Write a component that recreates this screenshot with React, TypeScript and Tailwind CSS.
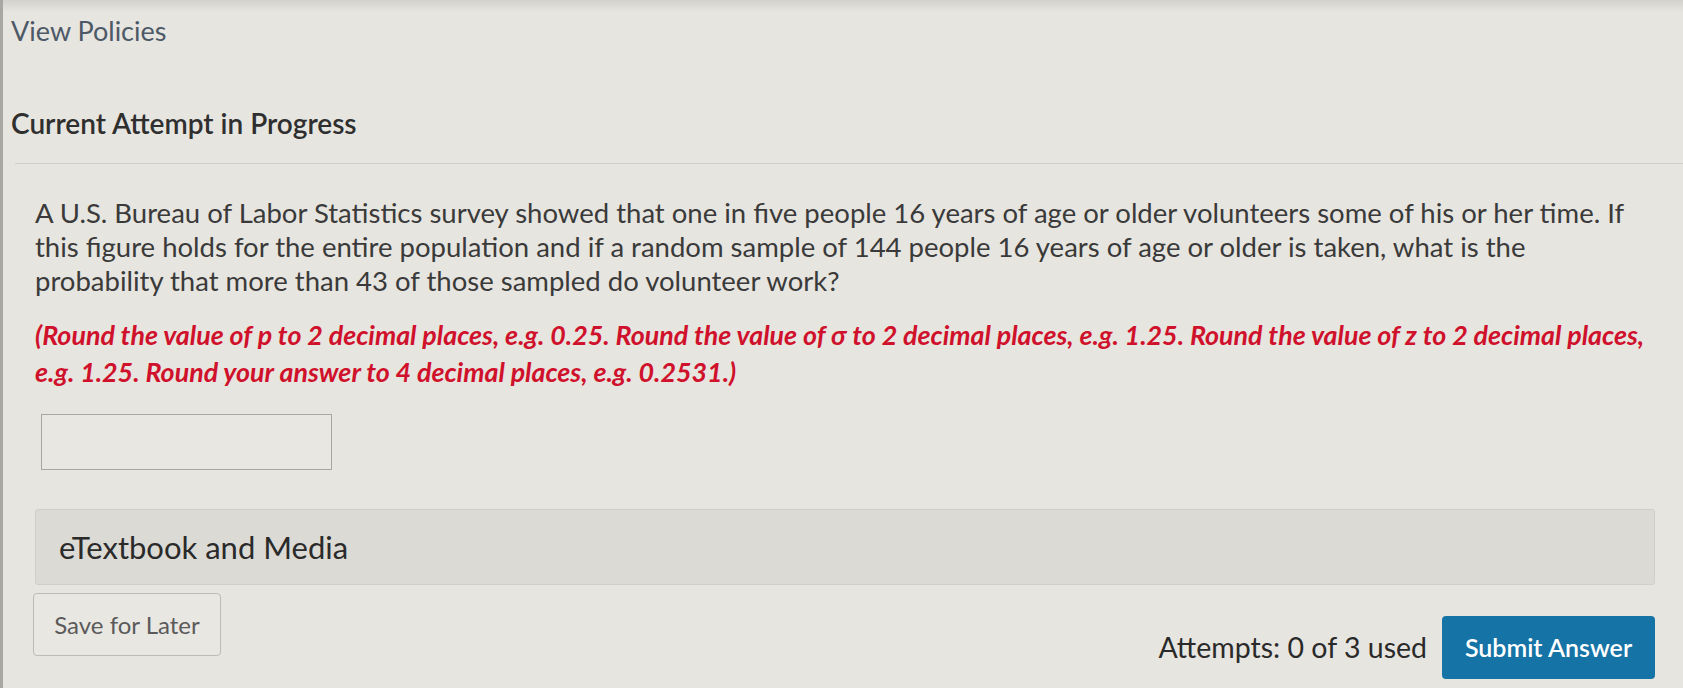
export default function App() {
  return (
    <div
      className="relative w-[1683px] h-[688px] overflow-hidden bg-[#e7e5e0] text-[#3a3a3a] border-l-[3px] border-[#a9a7a3]"
      style={{ fontFamily: 'Lato, "Open Sans", sans-serif' }}
    >
      <div className="h-[12px] bg-gradient-to-b from-[#d3d1cd] to-[#e7e5e0]" />
      <div className="pl-[8px] pt-[1px]">
        <div className="text-[27px] leading-[36px] text-[#4d5966]">View Policies</div>
        <div className="mt-[56px] text-[28px] leading-[36px] font-semibold text-[#2f2f2f]">
          Current Attempt in Progress
        </div>
      </div>

      <div className="ml-[12px] mt-[22px] border-t border-[#cfcdc8]" />

      <div className="pl-[32px] pr-[28px]">
        <p className="mt-[32px] w-[1600px] text-[27.5px] leading-[34px]">
          A U.S. Bureau of Labor Statistics survey showed that one in five people 16 years of age or older volunteers some
          of his or her time. If this figure holds for the entire population and if a random sample of 144 people 16 years
          of age or older is taken, what is the probability that more than 43 of those sampled do volunteer work?
        </p>

        <p className="mt-[19px] w-[1640px] text-[26.8px] leading-[37px] font-bold italic text-[#d0112b]">
          (Round the value of p to 2 decimal places, e.g. 0.25. Round the value of σ to 2 decimal places, e.g. 1.25. Round
          the value of z to 2 decimal places, e.g. 1.25. Round your answer to 4 decimal places, e.g. 0.2531.)
        </p>

        <input
          type="text"
          className="block mt-[23px] ml-[6px] w-[291px] h-[56px] border border-[#a8a6a2] bg-[#e9e7e2] outline-none"
        />

        <div className="mt-[39px] h-[76px] flex items-center pl-[23px] bg-[#dcdad5] border border-[#d0cec9] rounded-[3px]">
          <span className="text-[31px] text-[#2a2a2a]">eTextbook and Media</span>
        </div>

        <div className="flex items-start justify-between mt-[8px]">
          <button className="w-[188px] h-[63px] -ml-[2px] border border-[#bdbbb7] rounded-[4px] text-[24px] text-[#5a5a5a] bg-[#e9e7e2]">
            Save for Later
          </button>
          <div className="flex items-center gap-[15px] mt-[23px]">
            <span className="text-[28.5px] text-[#2a2a2a]">Attempts: 0 of 3 used</span>
            <button className="w-[213px] h-[63px] rounded-[4px] bg-[#1573a6] text-white text-[25px] font-semibold">
              Submit Answer
            </button>
          </div>
        </div>
      </div>
    </div>
  );
}
